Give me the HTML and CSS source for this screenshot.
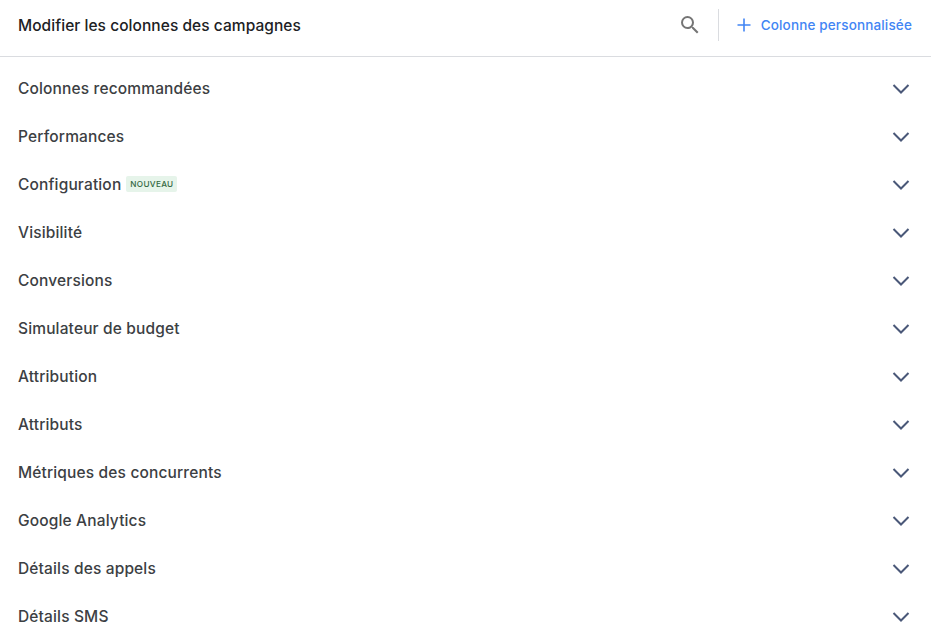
FILE: index.html
```html
<!DOCTYPE html>
<html lang="fr">
<head>
<meta charset="utf-8">
<title>Modifier les colonnes des campagnes</title>
<link rel="stylesheet" href="styles.css">
</head>
<body>
<header class="header">
  <h1 class="title">Modifier les colonnes des campagnes</h1>
  <div class="actions">
    <svg class="search" viewBox="0 0 24 24" width="24" height="24"><path d="M15.5 14h-.79l-.28-.27A6.47 6.47 0 0 0 16 9.5 6.5 6.5 0 1 0 9.5 16c1.61 0 3.09-.59 4.23-1.57l.27.28v.79l5 4.99L20.49 19l-4.99-5zm-6 0C7.01 14 5 11.99 5 9.5S7.01 5 9.5 5 14 7.01 14 9.5 11.99 14 9.5 14z"/></svg>
    <span class="divider"></span>
    <button class="add">
      <svg class="plus" viewBox="0 0 14 14" width="14" height="14"><path d="M7 0.5v13M0.5 7h13"/></svg>
      <span>Colonne personnalisée</span>
    </button>
  </div>
</header>
<main class="list">
  <div class="row"><span class="label">Colonnes recommandées</span><svg class="chev" viewBox="0 0 18 12"><path d="M1.5 2l7.5 7.5L16.5 2"/></svg></div>
  <div class="row"><span class="label">Performances</span><svg class="chev" viewBox="0 0 18 12"><path d="M1.5 2l7.5 7.5L16.5 2"/></svg></div>
  <div class="row"><span class="label">Configuration</span><span class="badge">NOUVEAU</span><svg class="chev" viewBox="0 0 18 12"><path d="M1.5 2l7.5 7.5L16.5 2"/></svg></div>
  <div class="row"><span class="label">Visibilité</span><svg class="chev" viewBox="0 0 18 12"><path d="M1.5 2l7.5 7.5L16.5 2"/></svg></div>
  <div class="row"><span class="label">Conversions</span><svg class="chev" viewBox="0 0 18 12"><path d="M1.5 2l7.5 7.5L16.5 2"/></svg></div>
  <div class="row"><span class="label">Simulateur de budget</span><svg class="chev" viewBox="0 0 18 12"><path d="M1.5 2l7.5 7.5L16.5 2"/></svg></div>
  <div class="row"><span class="label">Attribution</span><svg class="chev" viewBox="0 0 18 12"><path d="M1.5 2l7.5 7.5L16.5 2"/></svg></div>
  <div class="row"><span class="label">Attributs</span><svg class="chev" viewBox="0 0 18 12"><path d="M1.5 2l7.5 7.5L16.5 2"/></svg></div>
  <div class="row"><span class="label">Métriques des concurrents</span><svg class="chev" viewBox="0 0 18 12"><path d="M1.5 2l7.5 7.5L16.5 2"/></svg></div>
  <div class="row"><span class="label">Google Analytics</span><svg class="chev" viewBox="0 0 18 12"><path d="M1.5 2l7.5 7.5L16.5 2"/></svg></div>
  <div class="row"><span class="label">Détails des appels</span><svg class="chev" viewBox="0 0 18 12"><path d="M1.5 2l7.5 7.5L16.5 2"/></svg></div>
  <div class="row"><span class="label">Détails SMS</span><svg class="chev" viewBox="0 0 18 12"><path d="M1.5 2l7.5 7.5L16.5 2"/></svg></div>
</main>
</body>
</html>
```
FILE: styles.css
```css
html, body { margin: 0; height: 100%; overflow: hidden; background: #fff; }
body { font-family: "Inter", "Roboto", sans-serif; color: #3c4043; }
.header { height: 50px; display: flex; align-items: center; justify-content: space-between; padding: 0 19px 6px 18px; border-bottom: 1px solid #dadce0; }
.title { margin: 0; font-size: 15.5px; font-weight: 450; letter-spacing: .05px; color: #202124; }
.actions { display: flex; align-items: center; }
.search { fill: #757575; margin-right: 16px; }
.divider { width: 1px; height: 32px; background: #dadce0; margin-right: 18px; }
.add { display: flex; align-items: center; gap: 10px; padding: 0; border: 0; background: none; font: 450 13.5px "Inter", "Roboto", sans-serif; letter-spacing: .15px; color: #4285f4; }
.plus { fill: none; stroke: #4285f4; stroke-width: 1.6; }
.list { padding-top: 8px; margin-top: -1px; }
.row { height: 48px; display: flex; align-items: center; padding: 0 21px 0 18px; }
.label { font-size: 15.5px; font-weight: 450; letter-spacing: .15px; }
.badge { margin-left: 5px; padding: 0 4px; height: 16px; line-height: 16px; border-radius: 2px; background: #e6f4ea; color: #33683f; font-size: 8.2px; font-weight: 450; letter-spacing: .3px; }
.chev { margin: 2px 0 0 auto; width: 18px; height: 12px; fill: none; stroke: #4a5878; stroke-width: 2; }
```
